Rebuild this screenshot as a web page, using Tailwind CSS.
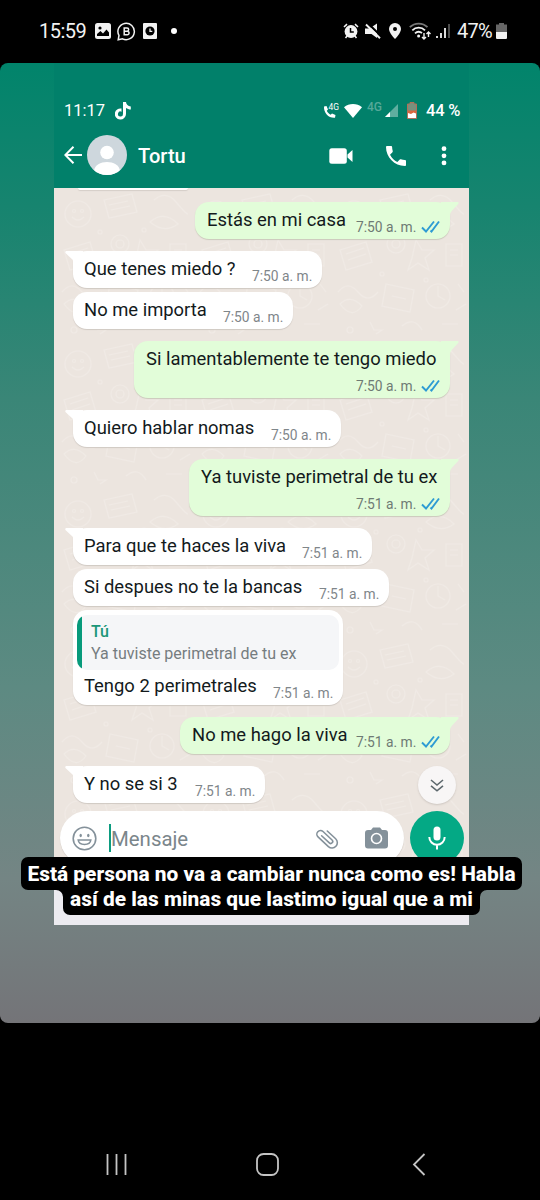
<!DOCTYPE html>
<html lang="es">
<head>
<meta charset="utf-8">
<title>Historia</title>
<script src="https://cdn.jsdelivr.net/npm/@tailwindcss/browser@4"></script>
</head>
<body class="bg-black">
<svg class="hidden">
  <symbol id="tail-in" viewBox="0 0 18 14"><path d="M18 0H2C0 0-.2 1.600 1 2.600L8 9V14H18Z" fill="#fff"/></symbol>
  <symbol id="tail-out" viewBox="0 0 18 14"><path d="M0 0H16.500C18 0 18 1.400 17 2.200L12 7.500C10 9.500 9 11 9 14H0Z" fill="#e2fdd9"/></symbol>
  <symbol id="ticks" viewBox="0 0 19 13"><path d="M1 7.500L5 11.500L13 1.500M9.500 10.500L10.500 11.500L18 1.500" fill="none" stroke="#2e9bd3" stroke-width="1.900"/></symbol>
</svg>
<div class="w-[540px] h-[1200px] overflow-hidden bg-black flex flex-col font-['Roboto',sans-serif]">

  <!-- Phone status bar -->
  <div class="h-[63px] shrink-0 flex items-start justify-between pl-[39px] pr-[33px] pt-[19px] text-[#f2f2f2]">
    <div class="flex items-center h-6">
      <span class="w-[48px] text-[20px] leading-6 tracking-[-0.500px] whitespace-nowrap">15:59</span>
      <svg class="ml-[8px] w-4 h-4" viewBox="0 0 16 16"><rect width="16" height="16" rx="2.500" fill="#f2f2f2"/><circle cx="5" cy="5" r="1.600"/><path d="M2 13V11L5.500 8L8 10.500L11.500 6.500L14 9.500V13Z"/></svg>
      <svg class="ml-[6px] w-[19px] h-[19px]" viewBox="0 0 19 19"><path d="M1.200 17.800L2 13.500A8.200 8.200 0 1 1 5.500 16.800Z" fill="none" stroke="#f2f2f2" stroke-width="1.500"/><path d="M7.200 5.900H10A1.600 1.600 0 0 1 10 9.200H7.200M7.200 9.200H10.300A1.700 1.700 0 0 1 10.300 12.700H7.200V5.200" fill="none" stroke="#f2f2f2" stroke-width="1.500"/></svg>
      <svg class="ml-[7px] w-[14px] h-4" viewBox="0 0 14 16"><rect width="14" height="16" rx="1" fill="#f2f2f2"/><circle cx="7" cy="8" r="4.600"/><path d="M7 5.500V8.300H9.300" fill="none" stroke="#f2f2f2" stroke-width="1.300"/></svg>
      <span class="ml-[14px] w-[6px] h-[6px] rounded-full bg-white"></span>
    </div>
    <div class="flex items-center h-6">
      <svg class="w-4 h-4" viewBox="0 0 16 16"><circle cx="8" cy="8.500" r="6.400" fill="#f2f2f2"/><path d="M1 4L4 1.200M15 4L12 1.200M2.500 15L4.500 12.500M13.500 15L11.500 12.500" stroke="#f2f2f2" stroke-width="1.600"/><path d="M7.500 5V9H10.800" fill="none" stroke="#000" stroke-width="1.500"/></svg>
      <svg class="ml-[6px] w-[16px] h-4" viewBox="0 0 16 16"><path d="M0 5.500H4.500L12 .500V15L6.500 11H0Z" fill="#f2f2f2"/><path d="M1.500 -1L17 14" stroke="#000" stroke-width="2.200"/><path d="M1 1.500L15 15.200" stroke="#f2f2f2" stroke-width="1.900"/></svg>
      <svg class="ml-[8px] w-[12px] h-4" viewBox="0 0 12 16"><path d="M6 0A6 6 0 0 1 12 6C12 10 6 16 6 16S0 10 0 6A6 6 0 0 1 6 0Z" fill="#f2f2f2"/><circle cx="6" cy="6" r="2"/></svg>
      <svg class="ml-[8px] w-[23px] h-[18px]" viewBox="0 0 23 18" fill="none"><path d="M.800 5.200A12.500 12.500 0 0 1 18.500 5.200" stroke="#777" stroke-width="1.800"/><path d="M3.300 8.300A9 9 0 0 1 16 8.300M6 11.300A5.500 5.500 0 0 1 13 11" stroke="#f2f2f2" stroke-width="1.800"/><circle cx="9.600" cy="14" r="1.500" fill="#f2f2f2"/><path d="M15 11V17M13 15L15 17L17 15M19.500 15V10M17.500 12L19.500 10L21.500 12" stroke="#f2f2f2" stroke-width="1.400"/></svg>
      <svg class="ml-[4px] w-[15px] h-4" viewBox="0 0 15 16"><path d="M1 13V15M5 10V15M9 5V15" stroke="#f2f2f2" stroke-width="1.800"/><path d="M13 1V15" stroke="#555" stroke-width="1.800"/></svg>
      <span class="ml-[6px] w-[36px] text-[20px] leading-6 tracking-[-0.700px] whitespace-nowrap">47%</span>
      <svg class="ml-[3px] w-[11px] h-[16px]" viewBox="0 0 11 16"><path d="M3 0H8V1.500H11V9H0V1.500H3Z" fill="#666"/><path d="M0 9H11V14A1.500 1.500 0 0 1 9.500 16H1.500A1.500 1.500 0 0 1 0 14Z" fill="#f2f2f2"/></svg>
    </div>
  </div>

  <!-- Story -->
  <div class="relative h-[960px] shrink-0 rounded-lg overflow-hidden bg-[linear-gradient(180deg,#01846b_0%,#17846f_15%,#3a8677_35%,#5d8a82_65%,#748584_85%,#747478_100%)] flex pl-[54px]">
    <div class="w-[415px] h-[862px] flex flex-col">
      <div class="h-[125px] shrink-0 bg-[#01806a] text-white">
        <div class="flex items-center pt-[36px] h-[59px] pl-[10px] pr-[9px] justify-between">
          <div class="flex items-center">
            <span class="w-[42px] text-[16.500px] leading-6 whitespace-nowrap">11:17</span>
            <svg class="ml-[9px] w-[16px] h-[18px]" viewBox="0 0 16 18"><path d="M8 0H11C11.200 2.500 13 4.200 15.800 4.400V7.500C14 7.500 12.300 6.900 11 6V12A5.600 5.600 0 1 1 6.500 6.500V9.700A2.500 2.500 0 1 0 8 12Z" fill="#fff"/></svg>
          </div>
          <div class="flex items-center">
            <svg class="w-[16px] h-[17px]" viewBox="0 0 16 17"><path d="M1 4.500L3.500 4L5 7.500L3.800 8.800C4.500 10.500 6 12 7.700 12.800L9 11.500L12.500 13L12 15.800C6 16.500.500 11 1 4.500Z" fill="#fff"/><text x="5.500" y="8.200" font-size="9" textLength="10.500" lengthAdjust="spacingAndGlyphs" fill="#fff">4G</text></svg>
            <svg class="ml-[5px] w-[18px] h-[14px]" viewBox="0 0 18 14"><path d="M0 3.200C5-1 13-1 18 3.200L9 14Z" fill="#fff"/></svg>
            <span class="ml-[5px] w-[17px] text-[12px] leading-4 mt-[-7px] font-medium text-[#55a899] whitespace-nowrap">4G</span>
            <svg class="ml-[1px] w-[13px] h-[13px]" viewBox="0 0 13 13"><path d="M13 0V13H0Z" fill="#5fae9f"/><path d="M5 8V13H0Z" fill="#fff"/></svg>
            <svg class="ml-[9px] w-[10px] h-[17px]" viewBox="0 0 10 17"><path d="M3 .500H7V2H9.500V16.500H.500V2H3Z" fill="#78907d" stroke="#b0705a"/><path d="M1 9H9V16H1Z" fill="#fff"/><path d="M1 8.500H9V11.500L6.500 10.500L4 12L1 11Z" fill="#d9663d"/></svg>
            <span class="ml-[9px] w-[34px] text-[16.500px] leading-6 tracking-[-0.200px] font-medium whitespace-nowrap">44 %</span>
          </div>
        </div>
        <div class="flex items-center h-[66px] pl-[10px] pr-[22px]">
          <svg class="w-[18px] h-[18px]" viewBox="0 0 18 18"><path d="M18 9H1.500M9.500 .800L1.300 9L9.500 17.200" fill="none" stroke="#fff" stroke-width="2"/></svg>
          <svg class="ml-[5px] w-10 h-10 rounded-full" viewBox="0 0 40 40"><rect width="40" height="40" fill="#ced7dd"/><circle cx="20" cy="17.500" r="6.800" fill="#fff"/><path d="M7 36C8 24 32 24 33 36L30 40H10Z" fill="#fff"/></svg>
          <span class="ml-[11px] text-[20.100px] leading-6 font-medium whitespace-nowrap grow mt-[1px]">Tortu</span>
          <svg class="w-6 h-4 mt-[1px] mr-[1px]" viewBox="0 0 24 16"><rect x=".300" y=".300" width="17.500" height="15.400" rx="2.500" fill="#fff"/><path d="M18.500 6.500L23.500 2V14L18.500 9.500Z" fill="#fff"/></svg>
          <svg class="ml-[32px] mt-[1px] w-5 h-5" viewBox="3 3 18 18"><path d="M6.620 10.790c1.440 2.830 3.760 5.140 6.590 6.590l2.200-2.200c.270-.270.670-.360 1.020-.240 1.120.370 2.330.570 3.570.570.550 0 1 .450 1 1V20c0 .550-.450 1-1 1-9.390 0-17-7.610-17-17 0-.550.450-1 1-1h3.500c.550 0 1 .450 1 1 0 1.250.200 2.450.570 3.570.110.350.030.740-.250 1.020l-2.200 2.200z" fill="#fff"/></svg>
          <svg class="ml-[35px] mt-[1px] w-[6px] h-5" viewBox="0 0 6 20"><circle cx="3" cy="2.700" r="2.400" fill="#fff"/><circle cx="3" cy="9.800" r="2.400" fill="#fff"/><circle cx="3" cy="16.900" r="2.400" fill="#fff"/></svg>
        </div>
      </div>

      <!-- Conversation -->
      <div class="relative h-[737px] shrink-0 bg-[#ece5df] overflow-hidden">
        <svg class="absolute inset-0 w-full h-full" aria-hidden="true">
          <defs><pattern id="doodles" width="138" height="150" patternUnits="userSpaceOnUse"><g fill="none" stroke="#f0eae5" stroke-width="1.200">
            <circle cx="24" cy="26" r="13"/><circle cx="20" cy="23" r="1.500"/><circle cx="28" cy="23" r="1.500"/><path d="M18 29Q24 35 30 29"/>
            <path d="M50 12L78 6L83 24L55 30ZM55 17L74 13M57 22L76 18"/><path d="M100 12Q112 2 122 14T134 26M96 34Q110 22 124 36Q110 46 96 34Z"/>
            <path d="M10 62L36 54L42 74L16 82ZM16 66L34 60M18 72L36 66"/><circle cx="66" cy="56" r="9"/><circle cx="66" cy="56" r="4"/><path d="M86 52L92 62L104 62L95 70L99 82L88 75L78 82L82 70Z"/>
            <path d="M116 56H132V78H116ZM120 62H128M120 67H128"/><path d="M8 104Q18 92 28 104T48 104M10 116Q20 106 32 118Q22 132 10 116Z"/><path d="M56 96L84 102L80 124L52 118ZM62 108L76 111"/>
            <circle cx="108" cy="108" r="12"/><path d="M108 98V108L115 112M128 96L134 104M126 122L136 116M40 134L44 142L52 142L46 146M72 138Q84 128 92 142M112 136H128"/>
            <circle cx="46" cy="44" r="2"/><circle cx="90" cy="42" r="2"/><circle cx="52" cy="86" r="2"/><circle cx="96" cy="92" r="2"/><circle cx="20" cy="142" r="3"/>
          </g></pattern></defs>
          <rect width="100%" height="100%" fill="url(#doodles)"/>
        </svg>
        <div class="relative flex flex-col items-start pl-[19px] pr-[19px] text-[18.420px] leading-[36px] text-[#131a1c] whitespace-nowrap">
          <div class="ml-[5px] w-[110px] h-[2px] rounded-b-xl bg-white shadow-[0_1px_1px_#d5cec8]"></div>

          <div class="relative mt-[12px] self-end w-[255px] h-[37px] rounded-[14px] bg-[#e2fdd9] shadow-[0_1px_1px_#cbc9bc] flex pl-[12px]">
            <svg class="absolute right-[-9px] top-0 w-[18px] h-[14px]"><use href="#tail-out"/></svg>
            <span class="w-[149px]">Estás en mi casa</span><span class="w-[60px] pt-[7px] text-[13.800px] leading-[37px] text-[#6e7a74]">7:50 a. m.</span><svg class="ml-[5px] mt-[18px] w-[19px] h-[13px]"><use href="#ticks"/></svg>
          </div>

          <div class="relative mt-[12px] w-[249px] h-[37px] rounded-[14px] bg-white shadow-[0_1px_1px_#d0c9c3] flex pl-[11px]">
            <svg class="absolute left-[-8px] top-0 w-[18px] h-[14px]"><use href="#tail-in"/></svg>
            <span class="w-[168px]">Que tenes miedo ?</span><span class="pt-[7px] text-[13.800px] leading-[37px] text-[#7f868a]">7:50 a. m.</span>
          </div>
          <div class="mt-[4px] w-[220px] h-[37px] rounded-[14px] bg-white shadow-[0_1px_1px_#d0c9c3] flex pl-[11px]">
            <span class="w-[139px]">No me importa</span><span class="pt-[7px] text-[13.800px] leading-[37px] text-[#7f868a]">7:50 a. m.</span>
          </div>

          <div class="relative mt-[12px] self-end w-[316px] h-[57px] rounded-[14px] bg-[#e2fdd9] shadow-[0_1px_1px_#cbc9bc] flex flex-col pl-[12px] pr-[10px]">
            <svg class="absolute right-[-9px] top-0 w-[18px] h-[14px]"><use href="#tail-out"/></svg>
            <span>Si lamentablemente te tengo miedo</span>
            <div class="flex justify-end mt-[-2px]"><span class="w-[60px] text-[13.800px] leading-[22px] text-[#6e7a74]">7:50 a. m.</span><svg class="ml-[5px] mt-[4px] w-[19px] h-[13px]"><use href="#ticks"/></svg></div>
          </div>

          <div class="relative mt-[12px] w-[268px] h-[37px] rounded-[14px] bg-white shadow-[0_1px_1px_#d0c9c3] flex pl-[11px]">
            <svg class="absolute left-[-8px] top-0 w-[18px] h-[14px]"><use href="#tail-in"/></svg>
            <span class="w-[187px]">Quiero hablar nomas</span><span class="pt-[7px] text-[13.800px] leading-[37px] text-[#7f868a]">7:50 a. m.</span>
          </div>

          <div class="relative mt-[12px] self-end w-[261px] h-[57px] rounded-[14px] bg-[#e2fdd9] shadow-[0_1px_1px_#cbc9bc] flex flex-col pl-[12px] pr-[10px]">
            <svg class="absolute right-[-9px] top-0 w-[18px] h-[14px]"><use href="#tail-out"/></svg>
            <span>Ya tuviste perimetral de tu ex</span>
            <div class="flex justify-end mt-[-2px]"><span class="w-[60px] text-[13.800px] leading-[22px] text-[#6e7a74]">7:51 a. m.</span><svg class="ml-[5px] mt-[4px] w-[19px] h-[13px]"><use href="#ticks"/></svg></div>
          </div>

          <div class="relative mt-[12px] w-[299px] h-[37px] rounded-[14px] bg-white shadow-[0_1px_1px_#d0c9c3] flex pl-[11px]">
            <svg class="absolute left-[-8px] top-0 w-[18px] h-[14px]"><use href="#tail-in"/></svg>
            <span class="w-[218px]">Para que te haces la viva</span><span class="pt-[7px] text-[13.800px] leading-[37px] text-[#7f868a]">7:51 a. m.</span>
          </div>
          <div class="mt-[4px] w-[316px] h-[37px] rounded-[14px] bg-white shadow-[0_1px_1px_#d0c9c3] flex pl-[11px]">
            <span class="w-[235px]">Si despues no te la bancas</span><span class="pt-[7px] text-[13.800px] leading-[37px] text-[#7f868a]">7:51 a. m.</span>
          </div>
          <div class="mt-[4px] w-[270px] h-[95px] rounded-[14px] bg-white shadow-[0_1px_1px_#d0c9c3] p-[4px] pt-[5px]">
            <div class="h-[55px] rounded-[10px] overflow-hidden bg-[#f5f6f8] flex">
              <div class="w-[5px] bg-[#079a7b]"></div>
              <div class="pl-[9px] pt-[6px] text-[16px] leading-[22px] text-[#757d80]">
                <div class="font-medium text-[#1c9679]">Tú</div>
                <div>Ya tuviste perimetral de tu ex</div>
              </div>
            </div>
            <div class="flex pl-[7px] mt-[-2px]"><span class="w-[189px]">Tengo 2 perimetrales</span><span class="pt-[7px] text-[13.800px] leading-[37px] text-[#7f868a]">7:51 a. m.</span></div>
          </div>

          <div class="relative mt-[12px] self-end w-[270px] h-[37px] rounded-[14px] bg-[#e2fdd9] shadow-[0_1px_1px_#cbc9bc] flex pl-[12px]">
            <svg class="absolute right-[-9px] top-0 w-[18px] h-[14px]"><use href="#tail-out"/></svg>
            <span class="w-[164px]">No me hago la viva</span><span class="w-[60px] pt-[7px] text-[13.800px] leading-[37px] text-[#6e7a74]">7:51 a. m.</span><svg class="ml-[5px] mt-[18px] w-[19px] h-[13px]"><use href="#ticks"/></svg>
          </div>

          <div class="flex mt-[12px] h-[37px] w-full">
            <div class="relative w-[192px] shrink-0 h-[37px] rounded-[14px] bg-white shadow-[0_1px_1px_#d0c9c3] flex pl-[11px]">
              <svg class="absolute left-[-8px] top-0 w-[18px] h-[14px]"><use href="#tail-in"/></svg>
              <span class="w-[111px]">Y no se si 3</span><span class="pt-[7px] text-[13.800px] leading-[37px] text-[#7f868a]">7:51 a. m.</span>
            </div>
            <div class="ml-[153px] w-[38px] h-[38px] shrink-0 rounded-full bg-[#f8f6f6] shadow-[0_1px_2px_#cdc6c0] flex items-center justify-center">
              <svg class="w-[14px] h-[13px]" viewBox="0 0 14 13"><path d="M1 1L7 6L13 1M1 6.800L7 11.800L13 6.800" fill="none" stroke="#5d686d" stroke-width="1.600"/></svg>
            </div>
          </div>
        </div>
        <!-- Composer -->
        <div class="relative flex mt-[8px] pl-[6px] items-start">
          <div class="w-[344px] h-[54px] rounded-full bg-white shadow-[0_1px_1px_#d0c9c3] flex items-center pl-[12px] pr-[16px]">
            <svg class="w-[25px] h-[25px]" viewBox="0 0 25 25" fill="none" stroke="#84919a" stroke-width="1.600"><circle cx="12.500" cy="12.500" r="11.300"/><ellipse cx="8.700" cy="9.500" rx="1.200" ry="1.700" fill="#84919a" stroke="none"/><ellipse cx="16.300" cy="9.500" rx="1.200" ry="1.700" fill="#84919a" stroke="none"/><path d="M6.200 14H18.800C18 20 7 20 6.200 14Z"/></svg>
            <span class="ml-[12px] w-[2px] h-7 bg-[#0c9c80]"></span>
            <span class="grow text-[20.400px] leading-7 text-[#7b868b] mt-[2px]">Mensaje</span>
            <svg class="w-[24px] h-[22px]" viewBox="-13 -12 26 24" fill="none" stroke="#84919a" stroke-width="1.700" stroke-linecap="round"><path transform="rotate(43)" d="M-6 2.200H5.500A2.200 2.200 0 0 0 5.500 -2.200H-8A4 4 0 0 0 -8 5.800H7.500A5.800 5.800 0 0 0 7.500 -5.800H-5"/></svg>
            <svg class="ml-[26px] w-[23px] h-[22px]" viewBox="0 0 23 22"><path d="M8 .500H15L17 3H20A3 3 0 0 1 23 6V18.500A3 3 0 0 1 20 21.500H3A3 3 0 0 1 0 18.500V6A3 3 0 0 1 3 3H6Z" fill="#84919a"/><circle cx="11.500" cy="11.500" r="5" fill="none" stroke="#fff" stroke-width="1.600"/></svg>
          </div>
          <div class="ml-[6px] w-[54px] h-[54px] rounded-full bg-[#04a985] flex items-center justify-center">
            <svg class="w-[18px] h-[24px]" viewBox="0 0 18 24"><rect x="5.500" y=".500" width="7" height="14" rx="3.500" fill="#fff"/><path d="M1.300 11A7.700 7.700 0 0 0 16.700 11M9 18.500V23.500" fill="none" stroke="#fff" stroke-width="2"/></svg>
          </div>
        </div>
        <div class="relative mt-[25px] h-[45px] bg-[#ecebf0]"></div>
      </div>
    </div>

    <!-- Caption laid over the story -->
    <div class="absolute left-0 top-[794px] w-full flex flex-col items-center text-white font-extrabold text-[20.880px] whitespace-nowrap">
      <div class="relative z-10 w-[501px] ml-[3px] h-[33px] rounded-[7px] bg-black leading-[35px] text-center">Está persona no va a cambiar nunca como es! Habla</div>
      <div class="relative w-[417px] ml-[3px] mt-[-7px] h-[32px] rounded-b-[7px] bg-black leading-[33px] text-center"><span class="relative z-20">así de las minas que lastimo igual que a mi</span>
        <svg class="absolute left-[-7px] top-[7px] w-[7px] h-[7px]" viewBox="0 0 7 7"><path d="M0 0H7V7A7 7 0 0 0 0 0Z"/></svg>
        <svg class="absolute right-[-7px] top-[7px] w-[7px] h-[7px]" viewBox="0 0 7 7"><path d="M7 0H0V7A7 7 0 0 1 7 0Z"/></svg>
      </div>
    </div>
  </div>

  <!-- Navigation -->
  <div class="grow flex items-start pt-[130px] pl-[106px]">
    <svg class="w-[21px] h-[23px]" viewBox="0 0 21 23"><path d="M1.500 1V22M10.500 1V22M19.500 1V22" stroke="#c4c4c4" stroke-width="1.800"/></svg>
    <svg class="ml-[129px] w-[23px] h-[23px]" viewBox="0 0 23 23"><rect x="1" y="1" width="21" height="21" rx="6.500" fill="none" stroke="#c4c4c4" stroke-width="1.800"/></svg>
    <svg class="ml-[133px] w-[14px] h-[23px]" viewBox="0 0 14 23"><path d="M12.500 1L2 11.500L12.500 22" fill="none" stroke="#c4c4c4" stroke-width="1.800"/></svg>
  </div>
</div>
</body>
</html>
